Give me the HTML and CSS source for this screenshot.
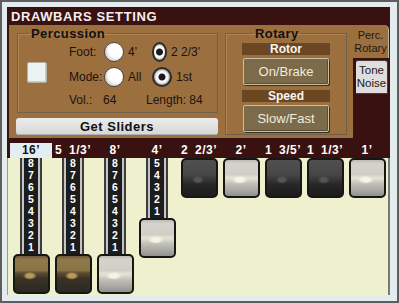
FILE: index.html
```html
<!DOCTYPE html>
<html lang="en">
<head>
    <meta charset="UTF-8">
    <meta name="viewport" content="width=device-width, initial-scale=1.0">
    <title>Drawbars Setting</title>
    <link rel="stylesheet" href="styles.css">
</head>
<body>
<div class="screen">
    <div class="window">
        <div class="title">DRAWBARS SETTING</div>

        <div class="top">
            <div class="panel">
                <div class="left-col">
                    <fieldset class="group perc">
                        <legend>Percussion</legend>
                        <div class="perc-body">
                            <div class="check-col"><span class="check"></span></div>
                            <div class="opts">
                                <div class="opt-row">
                                    <span class="opt-label">Foot:</span>
                                    <span class="opt"><span class="radio"></span>4'</span>
                                    <span class="opt"><span class="radio on"></span>2 2/3'</span>
                                </div>
                                <div class="opt-row mode">
                                    <span class="opt-label">Mode:</span>
                                    <span class="opt"><span class="radio"></span>All</span>
                                    <span class="opt"><span class="radio on"></span>1st</span>
                                </div>
                                <div class="opt-row vol">
                                    <span class="vol-label">Vol.:</span>
                                    <span class="vol-value">64</span>
                                    <span>Length: 84</span>
                                </div>
                            </div>
                        </div>
                    </fieldset>
                    <button class="get-sliders">Get Sliders</button>
                </div>

                <fieldset class="group rotary">
                    <legend>Rotary</legend>
                    <div class="sub-head">Rotor</div>
                    <button class="rot-btn">On/Brake</button>
                    <div class="sub-head speed">Speed</div>
                    <button class="rot-btn">Slow/Fast</button>
                </fieldset>
            </div>

            <div class="tabs">
                <div class="tab tab-on"><span>Perc.</span><span>Rotary</span></div>
                <div class="tab tab-off"><span>Tone</span><span>Noise</span></div>
            </div>
        </div>

        <div class="bars-head" id="bars-head"></div>
        <div class="bars" id="bars"></div>
    </div>
</div>

<script>
    // footage, position (0-8), cap colour
    const drawbars = [
        { label: "16’", value: 8, color: "brown" },
        { label: "5 1/3’", value: 8, color: "brown" },
        { label: "8’", value: 8, color: "white" },
        { label: "4’", value: 5, color: "white" },
        { label: "2 2/3’", value: 0, color: "black" },
        { label: "2’", value: 0, color: "white" },
        { label: "1 3/5’", value: 0, color: "black" },
        { label: "1 1/3’", value: 0, color: "black" },
        { label: "1’", value: 0, color: "white" }
    ];

    function renderDrawbars() {
        const head = document.getElementById("bars-head");
        const body = document.getElementById("bars");
        drawbars.forEach((bar, i) => {
            head.innerHTML += `<span class="bar-label${i === 0 ? " sel" : ""}">${bar.label}</span>`;
            let digits = "";
            for (let n = bar.value; n >= 1; n--) {
                digits += `<span>${n}</span>`;
            }
            body.innerHTML += `
                <div class="bar">
                    ${bar.value ? `<div class="shaft">${digits}</div>` : ""}
                    <div class="knob ${bar.color}"></div>
                </div>`;
        });
    }

    renderDrawbars();
</script>
</body>
</html>
```

FILE: styles.css
```css
body {
    margin: 0;
    font-family: "Liberation Sans", Arial, sans-serif;
}

.screen {
    width: 399px;
    height: 303px;
    box-sizing: border-box;
    border: 2px solid #5e5e5e;
    background-color: #e3ecef;
    padding: 5px 7px 6px 5px;
}

.window {
    height: 100%;
    display: flex;
    flex-direction: column;
    background-color: #3a1111;
}

.title {
    height: 18px;
    line-height: 19px;
    padding-left: 4px;
    color: #f4eeee;
    font-size: 13px;
    font-weight: bold;
    letter-spacing: 0.6px;
}

.top {
    height: 113px;
    display: flex;
}

.panel {
    width: 344px;
    margin-left: 2px;
    box-sizing: border-box;
    padding: 1px 0 0 7px;
    background-color: #9c6f3e;
    display: flex;
    gap: 7px;
}

.left-col {
    width: 202px;
    display: flex;
    flex-direction: column;
}

.group {
    margin: 0;
    padding: 0;
    min-width: 0;
    border: 1px solid #6f604a;
    box-shadow: inset 1px 1px 0 #b08655;
}

.group legend {
    margin-left: 11px;
    padding: 0 2px;
    font-size: 13px;
    font-weight: bold;
    letter-spacing: 0.4px;
    line-height: 15px;
    color: #141010;
}

.perc {
    margin-left: 1px;
    height: 87px;
    box-sizing: border-box;
}

.perc-body {
    display: flex;
    font-size: 12px;
    color: #1a1410;
}

.check-col {
    width: 51px;
    padding-top: 21px;
}

.check {
    display: block;
    width: 20px;
    height: 21px;
    margin-left: 9px;
    box-sizing: border-box;
    background-color: #edf2f3;
    border: 1px solid #b5b0a4;
    border-radius: 2px;
    box-shadow: inset -1px -1px 0 #c9cdcf;
}

.opt-row {
    height: 22px;
    display: flex;
    align-items: center;
}

.opt-row.mode {
    margin-top: 3px;
}

.opt-row.vol {
    height: 23px;
}

.opt-label {
    width: 35px;
}

.opt {
    width: 48px;
    display: flex;
    align-items: center;
    white-space: nowrap;
}

.radio {
    width: 20px;
    height: 20px;
    box-sizing: border-box;
    margin-right: 4px;
    border-radius: 50%;
    border: 1px solid #4a4a4a;
    background: radial-gradient(circle at 60% 40%, #ffffff 45%, #d0d0d0 75%, #8c8c8c 100%);
}

.radio.on {
    border: 2px solid #2c2c2c;
    background: radial-gradient(circle, #1a1a1a 0, #1a1a1a 3px, #ffffff 4px, #f0f0f0 6px, #9a9a9a 8px);
}

.vol-label {
    width: 34px;
}

.vol-value {
    width: 43px;
}

.get-sliders {
    margin-top: 5px;
    height: 17px;
    padding: 0;
    border: none;
    border-radius: 3px;
    background: linear-gradient(#ececec, #d6d6d6);
    box-shadow: inset 0 -1px 0 #b0b0b0;
    font-family: inherit;
    font-size: 13px;
    font-weight: bold;
    letter-spacing: 0.5px;
    color: #111;
}

.rotary {
    width: 122px;
    height: 109px;
    box-sizing: border-box;
    padding: 0 16px;
    display: flex;
    flex-direction: column;
    align-items: center;
}

.sub-head {
    width: 88px;
    height: 12px;
    margin-top: 2px;
    background-color: #6b4622;
    color: #fbf6ee;
    font-size: 12px;
    font-weight: bold;
    line-height: 13px;
    text-align: center;
}

.sub-head.speed {
    margin-top: 5px;
}

.rot-btn {
    width: 86px;
    height: 27px;
    margin-top: 3px;
    padding: 0;
    box-sizing: border-box;
    border: 1px solid #c9bfa4;
    border-radius: 2px;
    background-color: #7b6b4b;
    box-shadow: inset -1px -1px 0 #5a4d35, 1px 1px 0 #3d2f1d;
    color: #efecdc;
    font-family: inherit;
    font-size: 13px;
}

.tabs {
    width: 36px;
    display: flex;
    flex-direction: column;
    align-items: flex-end;
}

.tab {
    box-sizing: border-box;
    display: flex;
    flex-direction: column;
    align-items: center;
    color: #1c1816;
    font-size: 11px;
    line-height: 13px;
}

.tab-on {
    width: 36px;
    height: 33px;
    padding-top: 4px;
    background-color: #9c6f3e;
    border-right: 1px solid #c4b49a;
    border-top-right-radius: 5px;
}

.tab-off {
    width: 33px;
    height: 34px;
    margin: 2px 1px 0 0;
    padding-top: 3px;
    background-color: #dedede;
    border: 1px solid #4a3a32;
    border-left-color: #2a1a14;
    border-radius: 3px 3px 0 0;
    font-size: 11.5px;
}

.bars-head {
    height: 20px;
    box-sizing: border-box;
    padding: 5px 0 0 3px;
    display: flex;
}

.bar-label {
    width: 42px;
    height: 15px;
    line-height: 15px;
    text-align: center;
    color: #fff;
    font-size: 12px;
    font-weight: bold;
    letter-spacing: 0.5px;
    word-spacing: 3px;
    white-space: nowrap;
}

.bar-label.sel {
    background-color: #e3eef2;
    color: #111;
}

.bars {
    flex: 1;
    display: flex;
    padding-left: 2px;
    background-color: #eff0cd;
    border-left: 1px solid #9a9a90;
    border-right: 2px solid #7a7a74;
}

.bar {
    width: 42px;
    display: flex;
    flex-direction: column;
    align-items: center;
}

.shaft {
    width: 22px;
    display: flex;
    flex-direction: column;
    background: linear-gradient(to right,
        #3c3c3c 0, #3c3c3c 2px, #c4c4c4 2px, #c4c4c4 4px,
        #1c1c1c 4px, #1c1c1c 18px,
        #c4c4c4 18px, #c4c4c4 20px, #3c3c3c 20px);
}

.shaft span {
    height: 12px;
    line-height: 12px;
    text-align: center;
    color: #fff;
    font-size: 10.4px;
    font-weight: bold;
}

.knob {
    width: 37px;
    height: 40px;
    box-sizing: border-box;
    border: 2px solid #161616;
    border-radius: 5px;
}

.knob.brown {
    background:
        radial-gradient(ellipse 7px 4px at 45% 55%, #b89a5a 50%, transparent 100%),
        linear-gradient(#6e5a38 0, #8f7849 10%, #8a7446 40%, #5d4c30 47%, #3a3226 62%, #2c2823 100%);
}

.knob.white {
    background:
        radial-gradient(ellipse 8px 4px at 45% 55%, #f4f4ea 50%, transparent 100%),
        linear-gradient(#bcbcb4 0, #d4d4cc 10%, #cfcfc6 40%, #e4e4d4 50%, #c0c0b8 66%, #a8a8a0 85%, #909090 100%);
}

.knob.black {
    background:
        radial-gradient(ellipse 6px 4px at 45% 55%, #555 50%, transparent 100%),
        linear-gradient(#505050 0, #474747 40%, #363636 55%, #262626 70%, #1c1c1c 100%);
}
```
